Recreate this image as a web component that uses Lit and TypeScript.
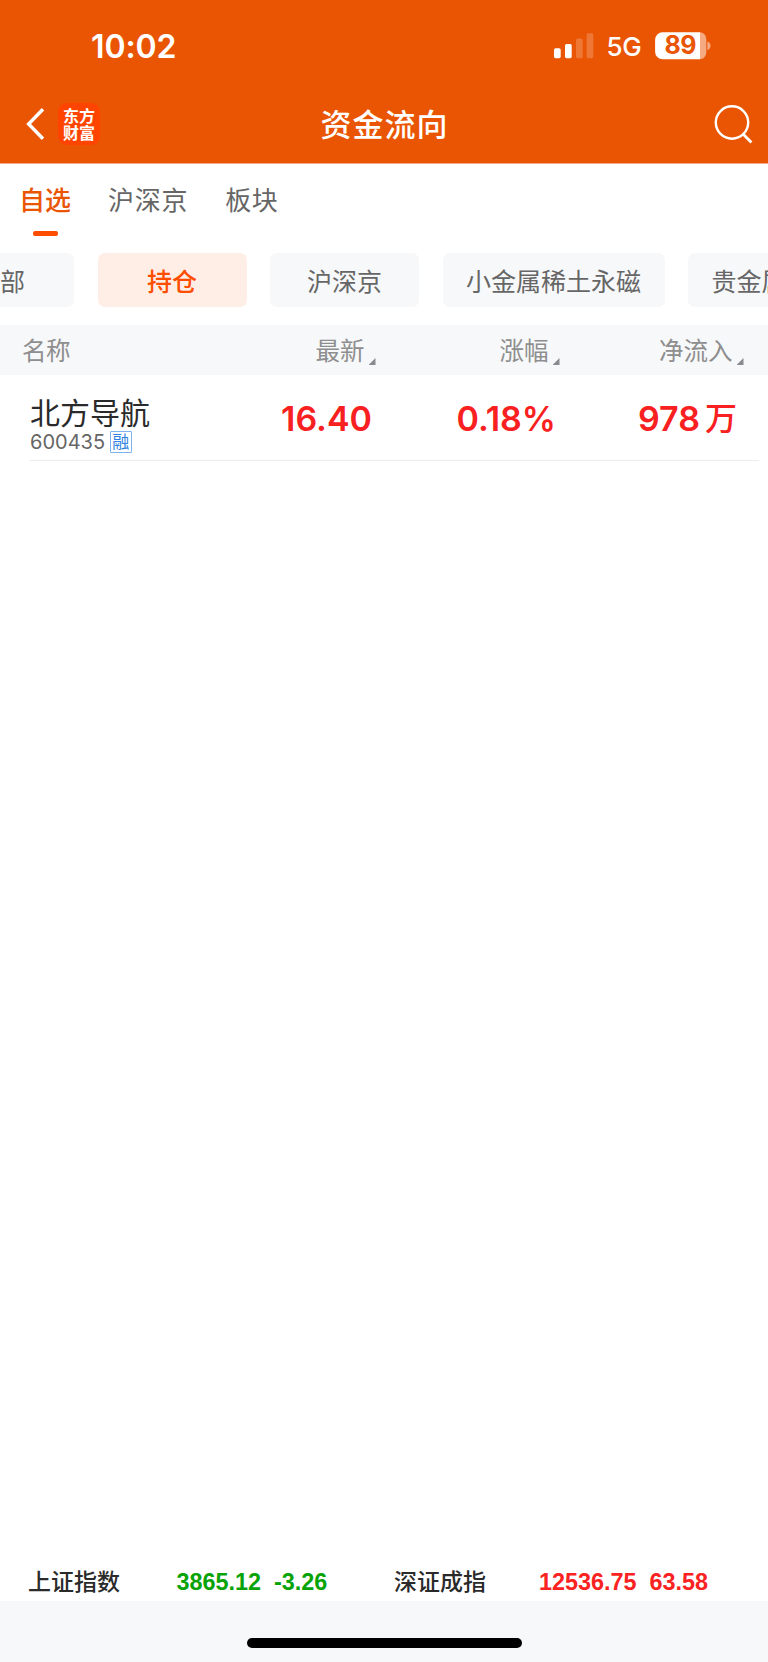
import { LitElement, html, css, svg } from "lit";
import { customElement, property } from "lit/decorators.js";
import { classMap } from "lit/directives/class-map.js";

@customElement("status-bar")
class StatusBar extends LitElement {
  static styles = css`
    :host { display: flex; align-items: center; height: 92px; padding: 0 57.500px 0 91px; color: #fff; font-family: Inter, sans-serif; box-sizing: border-box; }
    .time { font-size: 32px; font-weight: 600; line-height: 40px; flex: 1; padding-top: 1px; letter-spacing: -0.1px; }
    .signal { width: 40px; height: 26px; display: block; margin-right: 13px; }
    .net { font-size: 26px; font-weight: 500; line-height: 32px; width: 47px; padding-top: 2px; letter-spacing: -0.3px; }
    .battery { width: 57px; height: 28px; display: block; }
    .level { font: 700 25px Inter, sans-serif; fill: #ea5504; letter-spacing: -0.5px; }
  `;
  render() {
    return html`
      <span class="time">10:02</span>
      <svg class="signal" viewBox="0 0 40 26">
        ${[[0, 15.2, 10], [11, 11, 14.2], [22, 5.5, 19.7], [32.6, 0.2, 25]].map(
          ([x, y, h], i) => svg`<rect x=${x} y=${y} width="6.7" height=${h} rx="1.6" fill="#fff" fill-opacity=${i < 2 ? 1 : 0.2}></rect>`
        )}
      </svg>
      <span class="net">5G</span>
      <svg class="battery" viewBox="0 0 57 28">
        <path d="M8.600 .3H46v27H8.600a7.500 7.500 0 0 1-7.500-7.500v-12a7.500 7.500 0 0 1 7.500-7.500z" fill="#fff"></path>
        <path d="M46 .3c4 .3 6.300 3.400 6.300 7.500v12c0 4.100-2.300 7.200-6.300 7.500z" fill="#fff" fill-opacity=".5"></path>
        <path d="M53.400 9.500c2 .6 3.100 2.300 3.100 4.300s-1.100 3.700-3.100 4.300z" fill="#fff" fill-opacity=".5"></path>
        <text class="level" x="26.300" y="22.400" text-anchor="middle">89</text>
      </svg>
    `;
  }
}

@customElement("nav-bar")
class NavBar extends LitElement {
  static styles = css`
    :host { display: grid; grid-template-columns: 200px 1fr 200px; align-items: center; height: 64px; color: #fff; }
    .left { display: flex; align-items: center; padding-left: 25px; }
    .back { width: 20px; height: 34px; display: block; margin-right: 13px; }
    .logo { width: 42px; height: 42px; border-radius: 9px; background: #ff4400; box-sizing: border-box; padding-top: 4px; text-align: center; font-family: "Noto Sans CJK SC", sans-serif; font-size: 16px; font-weight: 700; line-height: 17px; }
    .title { text-align: center; font-size: 31px; font-weight: 500; line-height: 40px; letter-spacing: 1px; white-space: nowrap; padding: 0 0 2px 1px; }
    .search { display: block; width: 40px; height: 40px; justify-self: end; margin-right: 14px; }
  `;
  render() {
    return html`
      <div class="left">
        <svg class="back" viewBox="0 0 20 34" fill="none" stroke="#fff" stroke-width="3.400"><path d="M18 2.300 3.600 17 18 31.700"></path></svg>
        <div class="logo">东方<br />财富</div>
      </div>
      <div class="title">资金流向</div>
      <svg class="search" viewBox="0 0 40 40" fill="none" stroke="#fff" stroke-width="2.400"><circle cx="18" cy="18.500" r="16.200"></circle><path d="M29 30l8.400 8.400" stroke-width="2.800"></path></svg>
    `;
  }
}

@customElement("tab-strip")
class TabStrip extends LitElement {
  static styles = css`
    :host { display: flex; height: 89px; padding-left: 19px; gap: 37px; color: #666; font-size: 26px; line-height: 38px; box-sizing: border-box; padding-top: 16px; letter-spacing: .7px; }
    .tab { display: flex; flex-direction: column; align-items: center; }
    .active { color: #ea5504; font-weight: 500; letter-spacing: 0; }
    .active::after { content: ""; width: 25px; height: 4.500px; border-radius: 2px; background: #ff4d00; margin-top: 13px; }
  `;
  render() {
    return html`${["自选", "沪深京", "板块"].map((t, i) => html`<div class=${classMap({ tab: true, active: i === 0 })}>${t}</div>`)}`;
  }
}

@customElement("chip-row")
class ChipRow extends LitElement {
  static styles = css`
    :host { display: flex; gap: 23.500px; height: 72px; overflow: hidden; color: #666; font-size: 25px; line-height: 54px; white-space: nowrap; }
    .chip { flex: none; box-sizing: border-box; min-width: 149px; height: 54px; padding: 0 23.500px; border-radius: 7px; background: #f7f8fa; text-align: center; }
    .chip:first-child { margin-left: -75px; padding-right: 49px; text-align: right; }
    .chip:last-child { text-align: left; }
    .active { background: #ffeee6; color: #ff4d00; font-weight: 500; }
  `;
  render() {
    return html`${["全部", "持仓", "沪深京", "小金属稀土永磁", "贵金属"].map((t, i) => html`<div class=${classMap({ chip: true, active: i === 1 })}>${t}</div>`)}`;
  }
}

@customElement("fund-table")
class FundTable extends LitElement {
  static styles = css`
    :host { display: block; }
    .head, .row { display: grid; grid-template-columns: 192px 184px 184px 184px; }
    .head { height: 50px; background: #f7f8fa; color: #8e8e8e; font-size: 24.500px; line-height: 50px; }
    .name { padding-left: 22px; letter-spacing: -.5px; }
    .sort { display: flex; justify-content: flex-end; align-items: flex-end; }
    .tri { width: 7px; height: 7px; margin: 0 0.500px 10px 4px; background: #8a8a8e; clip-path: polygon(100% 0, 100% 100%, 0 100%); }
    .row { height: 86px; margin-left: 30px; margin-right: 9px; border-bottom: 1px solid #ececec; box-sizing: border-box; grid-template-columns: 162px 184px 184px 184px; }
    .stock { padding-top: 16px; white-space: nowrap; }
    .title { font-size: 30px; line-height: 40px; color: #2a2a2a; }
    .meta { display: flex; align-items: center; font: 400 20px/22px Inter, sans-serif; color: #666; }
    .badge { box-sizing: border-box; width: 21.500px; height: 21.500px; margin-left: 5px; border: 1.500px solid #7db2ee; border-radius: 1px; color: #2f82e0; font: 400 17px/18px "Noto Sans CJK SC", sans-serif; display: flex; justify-content: center; }
    .num { display: flex; justify-content: flex-end; font: 600 34px/88px Inter, sans-serif; color: #f82020; white-space: nowrap; padding-right: 4px; height: 85px; }
    .money { padding-right: 7px; }
    .unit { font: 500 32px/83px "Noto Sans CJK SC", sans-serif; margin-left: 5px; }
  `;
  render() {
    return html`
      <div class="head">
        <div class="name">名称</div>
        ${["最新", "涨幅", "净流入"].map((t) => html`<div class="sort">${t}<i class="tri"></i></div>`)}
      </div>
      <div class="row">
        <div class="stock">
          <div class="title">北方导航</div>
          <div class="meta">600435<span class="badge">融</span></div>
        </div>
        <div class="num">16.40</div>
        <div class="num">0.18%</div>
        <div class="num money">978<span class="unit">万</span></div>
      </div>
    `;
  }
}

@customElement("index-quote")
class IndexQuote extends LitElement {
  @property() name = "";
  @property() value = "";
  @property() change = "";
  @property({ type: Boolean }) up = false;
  static styles = css`
    :host { display: flex; align-items: flex-start; white-space: nowrap; }
    .name { color: #2a2a2a; font-size: 23px; font-weight: 500; line-height: 33px; flex: none; }
    .nums { display: flex; gap: 13px; font: 700 23.400px/36px "Liberation Sans", sans-serif; color: #08a308; }
    .up { color: #fb2222; }
  `;
  render() {
    return html`<span class="name">${this.name}</span><span class=${classMap({ nums: true, up: this.up })}><span>${this.value}</span><span>${this.change}</span></span>`;
  }
}

@customElement("app-root")
class AppRoot extends LitElement {
  static styles = css`
    :host { display: flex; flex-direction: column; width: 768px; height: 1662px; background: #fff; overflow: hidden; font-family: "Noto Sans CJK SC", sans-serif; }
    .top { height: 163px; background: #ea5504; border-bottom: 1px solid #f5a884; flex: none; }
    .body { flex: 1; }
    .quotes { display: flex; height: 37px; padding-left: 28px; }
    .sh { width: 366px; gap: 56.500px; }
    .sz { gap: 53px; }
    .home { height: 61px; background: #f7f8fa; display: flex; justify-content: center; box-sizing: border-box; padding-top: 37px; }
    .bar { width: 275px; height: 9.500px; border-radius: 5px; background: #000; }
    index-quote { flex: none; }
  `;
  render() {
    return html`
      <div class="top"><status-bar></status-bar><nav-bar></nav-bar></div>
      <tab-strip></tab-strip>
      <chip-row></chip-row>
      <fund-table class="body"></fund-table>
      <div class="quotes">
        <index-quote class="sh" name="上证指数" value="3865.12" change="-3.26"></index-quote>
        <index-quote class="sz" name="深证成指" value="12536.75" change="63.58" up></index-quote>
      </div>
      <div class="home"><div class="bar"></div></div>
    `;
  }
}
